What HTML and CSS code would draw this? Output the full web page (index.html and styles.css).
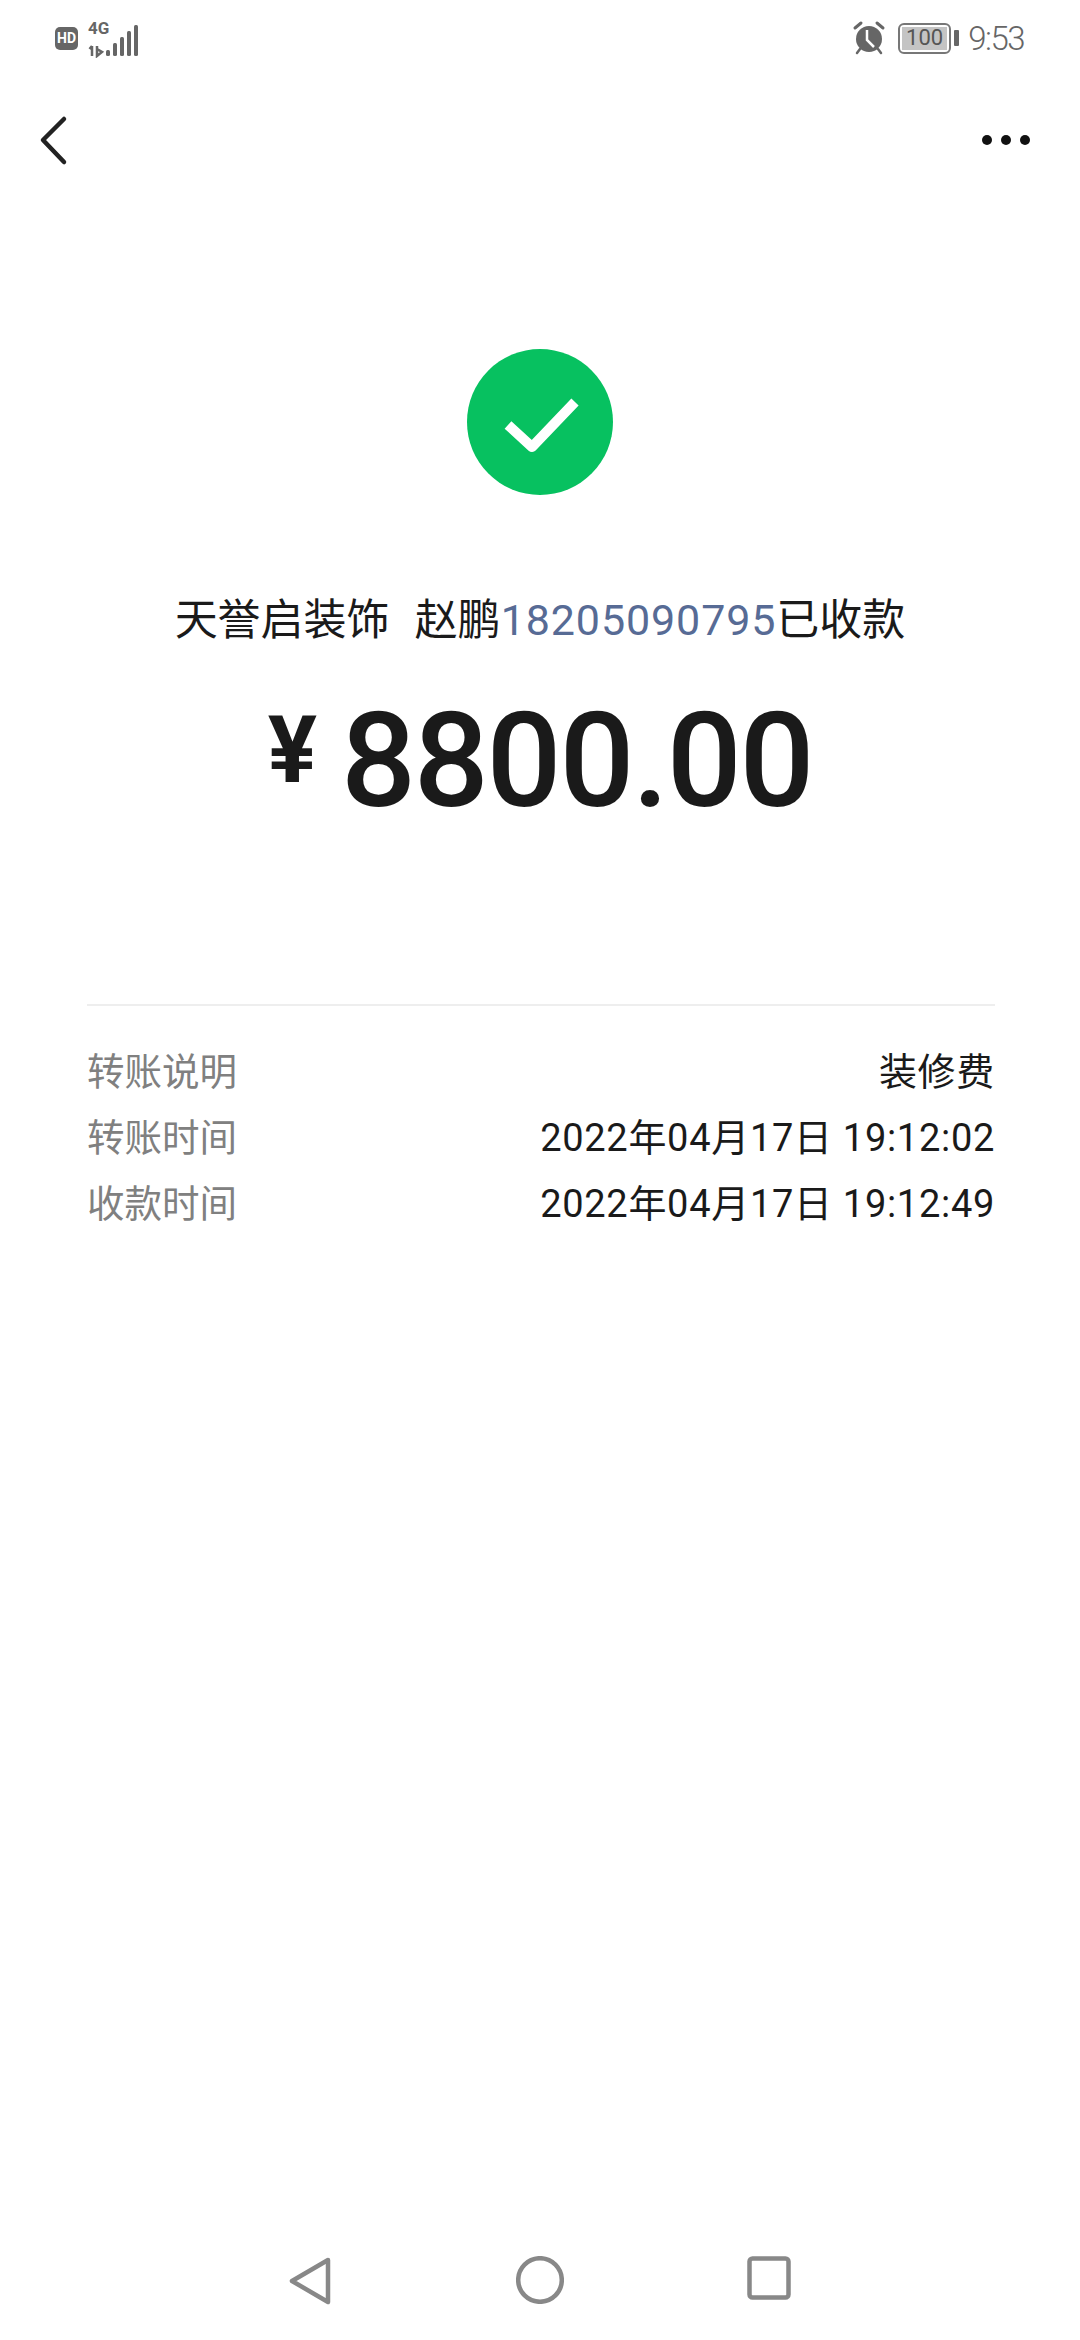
FILE: index.html
```html
<!DOCTYPE html>
<html lang="zh-CN">
<head>
  <meta charset="UTF-8">
  <title>转账详情</title>
  <link rel="stylesheet" href="styles.css">
</head>
<body>

<div class="page">
  <div class="status-bar">
    <div class="status-left">
      <span class="hd-badge">HD</span>
      <svg class="signal" width="64" height="40" viewBox="0 0 64 40">
        <text class="signal-label" x="0" y="16">4G</text>
        <path d="M4 28v10M1.500 31l2.500-3M9 28v10l5-4-5-3" fill="none" stroke="#666" stroke-width="2.500"/>
        <g fill="#666">
          <rect x="18" y="32" width="4" height="6" rx="1.500"/>
          <rect x="25" y="25" width="4" height="13" rx="1.500"/>
          <rect x="32" y="19" width="4" height="19" rx="1.500"/>
          <rect x="39" y="13" width="4" height="25" rx="1.500"/>
          <rect x="46" y="7" width="4" height="31" rx="1.500"/>
        </g>
      </svg>
    </div>
    <div class="status-right">
      <svg width="34" height="36" viewBox="0 0 34 36">
        <path d="M3 8l6-5M31 8l-6-5" stroke="#666" stroke-width="3" stroke-linecap="round"/>
        <path d="M8 29l-3 4M26 29l3 4" stroke="#666" stroke-width="2.500" stroke-linecap="round"/>
        <circle cx="17" cy="19" r="13" fill="#666"/>
        <path d="M15 10v10l7 7" fill="none" stroke="#fff" stroke-width="2.500"/>
      </svg>
      <div class="battery">
        <div class="battery-body"><span class="battery-level">100</span></div>
        <div class="battery-nub"></div>
      </div>
      <span class="clock">9:53</span>
    </div>
  </div>

  <div class="toolbar">
    <svg width="34" height="52" viewBox="0 0 34 52">
      <path d="M28 5L7 26l21 22" fill="none" stroke="#222" stroke-width="4.500" stroke-linecap="round" stroke-linejoin="round"/>
    </svg>
    <div class="more">
      <span class="more-dot"></span>
      <span class="more-dot"></span>
      <span class="more-dot"></span>
    </div>
  </div>

  <div class="result">
    <svg class="result-icon" width="146" height="146" viewBox="0 0 146 146">
      <circle cx="73" cy="73" r="73" fill="#07c160"/>
      <path d="M41 76l24 22 43-45" fill="none" stroke="#fff" stroke-width="10" stroke-linejoin="round"/>
    </svg>
    <div class="result-title">
      <span class="shop-name">天誉启装饰</span>赵鹏<span class="phone">18205090795</span>已收款
    </div>
    <div class="amount">
      <span class="amount-sign">¥</span>
      <span class="amount-value">8800.00</span>
    </div>
  </div>

  <div class="details">
    <div class="detail-row">
      <span class="detail-label">转账说明</span>
      <span class="detail-value">装修费</span>
    </div>
    <div class="detail-row">
      <span class="detail-label">转账时间</span>
      <span class="detail-value">2022年04月17日 19:12:02</span>
    </div>
    <div class="detail-row">
      <span class="detail-label">收款时间</span>
      <span class="detail-value">2022年04月17日 19:12:49</span>
    </div>
  </div>

  <div class="nav-bar">
    <svg width="44" height="50" viewBox="0 0 44 50">
      <path d="M40 4L4 25l36 21z" fill="none" stroke="#888" stroke-width="4.500" stroke-linejoin="round"/>
    </svg>
    <svg width="48" height="48" viewBox="0 0 48 48">
      <circle cx="24" cy="24" r="21.800" fill="none" stroke="#888" stroke-width="4.500"/>
    </svg>
    <svg width="44" height="44" viewBox="0 0 44 44">
      <rect x="2.500" y="2.500" width="39" height="39" rx="3" fill="none" stroke="#888" stroke-width="4.500"/>
    </svg>
  </div>
</div>

</body>
</html>
```

FILE: styles.css
```css
* {
  box-sizing: border-box;
}

body {
  margin: 0;
  background: #fff;
  font-family: Roboto, "Noto Sans CJK SC", sans-serif;
}

.page {
  width: 1080px;
  height: 2340px;
  display: flex;
  flex-direction: column;
  background: #fff;
}

/* status bar */
.status-bar {
  height: 76px;
  padding: 0 56px 0 55px;
  display: flex;
  justify-content: space-between;
  align-items: center;
  color: #666;
}

.status-left {
  display: flex;
  align-items: center;
  gap: 10px;
}

.hd-badge {
  width: 23px;
  height: 23px;
  border-radius: 5px;
  background: #666;
  color: #fff;
  font-size: 14px;
  font-weight: 700;
  line-height: 23px;
  text-align: center;
}

.signal-label {
  font-family: Roboto, sans-serif;
  font-size: 17px;
  font-weight: 700;
  fill: #666;
}

.status-right {
  display: flex;
  align-items: center;
}

.battery {
  margin-left: 12px;
  display: flex;
  align-items: center;
  gap: 3px;
}

.battery-body {
  width: 53px;
  height: 31px;
  border: 2.500px solid #777;
  border-radius: 6px;
  padding: 2px;
}

.battery-level {
  display: block;
  height: 100%;
  background: #c4c4c4;
  color: #555;
  font-size: 22px;
  line-height: 22px;
  text-align: center;
}

.battery-nub {
  width: 5px;
  height: 16px;
  background: #666;
  border-radius: 1px;
}

.clock {
  margin-left: 9px;
  font-size: 33px;
  font-weight: 300;
  letter-spacing: -1.500px;
  color: #666;
}

/* toolbar */
.toolbar {
  height: 100px;
  padding: 28px 50px 0 36px;
  display: flex;
  justify-content: space-between;
  align-items: center;
}

.more {
  display: flex;
  gap: 9px;
}

.more-dot {
  width: 10px;
  height: 10px;
  border-radius: 50%;
  background: #111;
}

/* result block */
.result {
  display: flex;
  flex-direction: column;
  align-items: center;
}

.result-icon {
  margin-top: 173px;
}

.result-title {
  margin-top: 97px;
  font-size: 43px;
  line-height: 56px;
  color: #1a1a1a;
}

.shop-name {
  margin-right: 25px;
}

.phone {
  color: #576b95;
  letter-spacing: 0.900px;
}

.amount {
  margin-top: 35px;
  display: flex;
  align-items: flex-start;
  gap: 24px;
  color: #1a1a1a;
}

.amount-sign {
  margin-top: 18px;
  font-size: 92px;
  line-height: 100px;
  font-weight: 700;
}

.amount-value {
  font-size: 132px;
  line-height: 156px;
  font-weight: 500;
  letter-spacing: -2.200px;
}

/* details */
.details {
  margin: 165px 85px 0 87px;
  padding-top: 29px;
  border-top: 2px solid #eeeeee;
}

.detail-row {
  height: 66px;
  display: flex;
  justify-content: space-between;
  align-items: center;
  font-size: 37.500px;
}

.detail-label {
  color: #808080;
}

.detail-value {
  font-size: 38px;
  letter-spacing: 0.700px;
  color: #1a1a1a;
}

/* nav bar */
.nav-bar {
  margin-top: auto;
  height: 84px;
  padding: 0 289px 0 288px;
  display: flex;
  justify-content: space-between;
  align-items: flex-start;
}
```
